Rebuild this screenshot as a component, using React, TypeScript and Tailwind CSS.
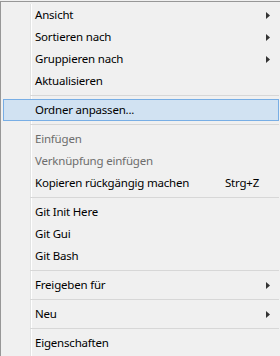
import { Fragment } from "react";

type Item =
  | { sep: true }
  | { sep?: false; label: string; sub?: boolean; disabled?: boolean; hot?: boolean; shortcut?: string };

const items: Item[] = [
  { label: "Ansicht", sub: true },
  { label: "Sortieren nach", sub: true },
  { label: "Gruppieren nach", sub: true },
  { label: "Aktualisieren" },
  { sep: true },
  { label: "Ordner anpassen...", hot: true },
  { sep: true },
  { label: "Einfügen", disabled: true },
  { label: "Verknüpfung einfügen", disabled: true },
  { label: "Kopieren rückgängig machen", shortcut: "Strg+Z" },
  { sep: true },
  { label: "Git Init Here" },
  { label: "Git Gui" },
  { label: "Git Bash" },
  { sep: true },
  { label: "Freigeben für", sub: true },
  { sep: true },
  { label: "Neu", sub: true },
  { sep: true },
  { label: "Eigenschaften" },
];

function Arrow() {
  return (
    <svg width="4" height="7" viewBox="0 0 4 7" className="shrink-0">
      <path d="M0 0 L4 3.5 L0 7 Z" fill="#333" />
    </svg>
  );
}

export default function App() {
  return (
    <div className="w-[280px] h-[356px] overflow-hidden bg-[#f0f0f0] pt-px font-['Noto_Sans',sans-serif] text-[11.5px] tracking-[-0.2px] leading-none">
      <div className="border-l border-t border-[#979797] pl-[2px] pr-px pt-[2px] h-full">
        <div className="bg-[linear-gradient(to_right,transparent_27px,#e2e3e3_27px,#e2e3e3_28px,#ffffff_28px,#ffffff_29px,transparent_29px)] h-full">
          {items.map((item, i) => (
            <Fragment key={i}>
              {item.sep ? (
                <div className="h-[7px] pl-[27px] flex items-center">
                  <div className="h-px w-full bg-[#d7d7d7]" />
                </div>
              ) : (
                <div
                  className={
                    "h-[22px] flex items-center pr-[9px] " +
                    (item.hot
                      ? "bg-[#d1e2f2] border border-[#78aee5] pl-[31px]"
                      : "pl-[32px]") +
                    (item.disabled ? " text-[#6d6d6d]" : " text-black")
                  }
                >
                  <span className={item.shortcut ? "w-[190px]" : ""}>{item.label}</span>
                  {item.shortcut && <span>{item.shortcut}</span>}
                  {item.sub && (
                    <span className="ml-auto">
                      <Arrow />
                    </span>
                  )}
                </div>
              )}
            </Fragment>
          ))}
        </div>
      </div>
    </div>
  );
}
